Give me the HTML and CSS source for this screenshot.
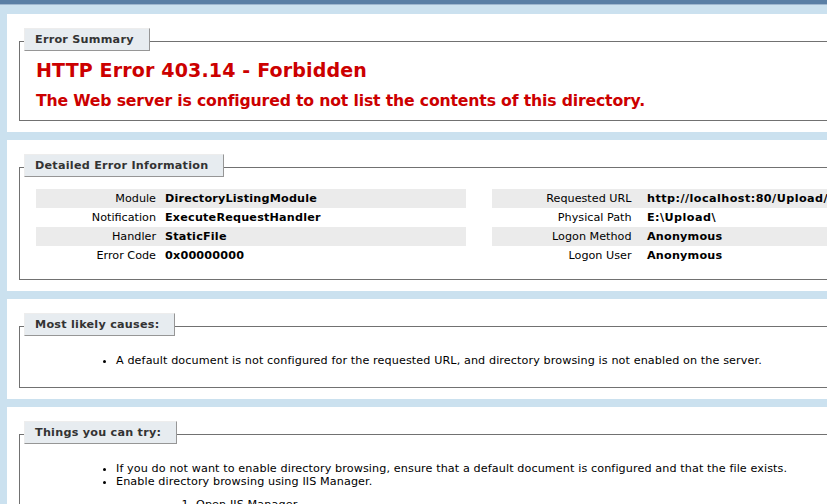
FILE: index.html
```html
<!DOCTYPE html>
<html lang="en">
<head>
<meta charset="utf-8">
<title>IIS 7.5 Detailed Error - 403.14 - Forbidden</title>
<link rel="stylesheet" href="styles.css">
</head>
<body>
<div class="header-bar"></div>
<div class="content">
  <div class="panel">
    <fieldset class="box">
      <legend><span class="legend-box">Error Summary</span></legend>
      <h2>HTTP Error 403.14 - Forbidden</h2>
      <h3>The Web server is configured to not list the contents of this directory.</h3>
    </fieldset>
  </div>

  <div class="panel">
    <fieldset class="box">
      <legend><span class="legend-box">Detailed Error Information</span></legend>
      <div class="details">
        <div class="details-left">
          <div class="info-row alt"><span class="info-label">Module</span><span class="info-value">DirectoryListingModule</span></div>
          <div class="info-row"><span class="info-label">Notification</span><span class="info-value">ExecuteRequestHandler</span></div>
          <div class="info-row alt"><span class="info-label">Handler</span><span class="info-value">StaticFile</span></div>
          <div class="info-row"><span class="info-label">Error Code</span><span class="info-value">0x00000000</span></div>
        </div>
        <div class="details-right">
          <div class="info-row alt"><span class="info-label">Requested URL</span><span class="info-value path">http://localhost:80/Upload/</span></div>
          <div class="info-row"><span class="info-label">Physical Path</span><span class="info-value path">E:\Upload\</span></div>
          <div class="info-row alt"><span class="info-label">Logon Method</span><span class="info-value">Anonymous</span></div>
          <div class="info-row"><span class="info-label">Logon User</span><span class="info-value">Anonymous</span></div>
        </div>
      </div>
    </fieldset>
  </div>

  <div class="panel">
    <fieldset class="box">
      <legend><span class="legend-box">Most likely causes:</span></legend>
      <ul>
        <li>A default document is not configured for the requested URL, and directory browsing is not enabled on the server.</li>
      </ul>
    </fieldset>
  </div>

  <div class="panel">
    <fieldset class="box">
      <legend><span class="legend-box">Things you can try:</span></legend>
      <ul>
        <li>If you do not want to enable directory browsing, ensure that a default document is configured and that the file exists.</li>
        <li>Enable directory browsing using IIS Manager.
          <ol>
            <li>Open IIS Manager.</li>
            <li>In the Features view, click Directory Browsing.</li>
            <li>On the Directory Browsing page, in the Actions pane, click Enable.</li>
          </ol>
        </li>
        <li>Verify that the configuration/system.webServer/directoryBrowse@enabled attribute is set to true in the site or application configuration file.</li>
      </ul>
    </fieldset>
  </div>
</div>
</body>
</html>
```

FILE: styles.css
```css
html, body {
  overflow: hidden;
}
body {
  margin: 0;
  background: #CBE1EF;
  font-family: "DejaVu Sans", Verdana, sans-serif;
  font-size: 11.2px;
  line-height: 13px;
  color: #000;
  letter-spacing: 0.1px;
}
.header-bar {
  height: 4px;
  background: #5A7FA5;
  border-bottom: 1px solid #9fb7cf;
}
.content {
  margin-left: 7px;
  padding-top: 1px;
  width: 1300px;
}
.panel {
  background: #FFF;
  width: 1267px;
  margin-top: 8px;
  padding: 10px;
}
.box {
  margin: 0 2px 1px 2px;
  padding: 0 15px 10px 16px;
  border: 1px solid #717171;
  min-width: 0;
}
legend {
  padding: 4px 0 8px 0;
  margin: 0 0 0 -12px;
}
.legend-box {
  display: block;
  color: #333333;
  padding: 4px 15px 4px 10px;
  border-top: 1px solid #EDEDED;
  border-left: 1px solid #EDEDED;
  border-right: 1px solid #969696;
  border-bottom: 1px solid #969696;
  background: #E7ECF0;
  font-weight: bold;
  font-size: 11.2px;
  line-height: 13px;
  letter-spacing: 0.25px;
}
h2 {
  font-size: 19.04px;
  line-height: 23px;
  margin: 0;
  color: #CC0000;
  letter-spacing: 0.14px;
}
h3 {
  font-size: 15.68px;
  line-height: 18px;
  margin: 10px 0 0 0;
  color: #CC0000;
  letter-spacing: -0.16px;
}
.details {
  display: flex;
  gap: 26px;
  margin: 4px 0;
}
.details-left {
  width: 430px;
  flex: 0 0 430px;
}
.details-right {
  width: 774px;
  flex: 0 0 774px;
  overflow: hidden;
}
.info-row {
  display: flex;
  padding: 3px 0;
  line-height: 13px;
}
.info-row.alt {
  background: #EBEBEB;
}
.info-label {
  flex: 0 0 129px;
  box-sizing: border-box;
  text-align: right;
  padding-right: 9px;
  letter-spacing: 0;
}
.details-right .info-label {
  flex-basis: 155px;
  padding-right: 15.5px;
}
.info-value {
  font-weight: bold;
  white-space: nowrap;
  letter-spacing: 0.2px;
}
.info-value.path {
  letter-spacing: 0.45px;
}
ul, ol {
  margin: 10px 0 10px 40px;
  padding-left: 40px;
}
```
